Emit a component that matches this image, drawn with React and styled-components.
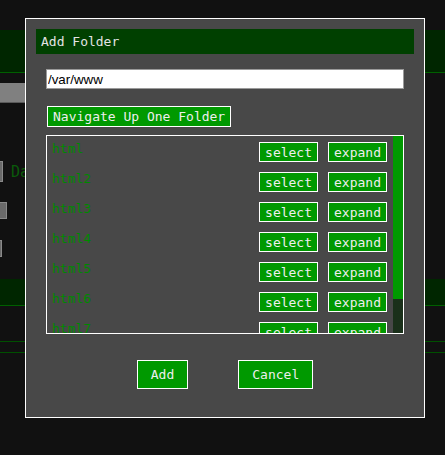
import React from 'react'
import styled, { createGlobalStyle } from 'styled-components'

const GlobalStyle = createGlobalStyle`
  html, body {
    margin: 0;
    padding: 0;
    background: #111111;
    font-family: "DejaVu Sans Mono", monospace;
    font-size: 13px;
  }
`

const Page = styled.div`
  padding-top: 30px;
  height: 455px;
  box-sizing: border-box;
  overflow: hidden;
`

const Band = styled.div`
  height: ${p => p.h}px;
  margin-top: ${p => p.mt || 0}px;
  background: #002600;
  border-bottom: 1px solid #006000;
`

const GrayBar = styled.div`
  margin-top: 10px;
  width: 300px;
  height: 20px;
  box-sizing: border-box;
  background: #808080;
  border-bottom: 1px solid #5a5a5a;
`

const StubRow = styled.div`
  display: flex;
  align-items: center;
  gap: 8px;
  margin-top: ${p => p.mt}px;
`

const Stub = styled.div`
  width: ${p => p.w}px;
  height: ${p => p.h}px;
  box-sizing: border-box;
  background: #6a6a6a;
  border: 1px solid #8a8a8a;
  border-left: none;
`

const DimText = styled.span`
  color: #0a5a0a;
  font-size: 15px;
`

const Rule = styled.div`
  margin-top: ${p => p.mt}px;
  height: 1px;
  background: #005000;
`

const Modal = styled.div`
  position: fixed;
  top: 18px;
  left: 25px;
  width: 400px;
  height: 400px;
  box-sizing: border-box;
  background: #484848;
  border: 1px solid #ffffff;
  padding: 10px;
  display: flex;
  flex-direction: column;
`

const TitleBar = styled.div`
  height: 25px;
  line-height: 25px;
  background: #004000;
  color: #e4e4e4;
  padding-left: 5px;
`

const Body = styled.div`
  padding: 0 10px;
  display: flex;
  flex-direction: column;
  align-items: flex-start;
`

const PathInput = styled.input`
  margin-top: 15px;
  width: 100%;
  height: 20px;
  box-sizing: border-box;
  border: 1px solid #9a9a9a;
  padding: 0 1px;
  font-family: "Liberation Sans", Arial, sans-serif;
  font-size: 13.33px;
  color: #000;
  background: #fff;
  outline: none;
`

const GreenButton = styled.button`
  font-family: "DejaVu Sans Mono", monospace;
  font-size: 13px;
  line-height: 15px;
  color: #eeeeee;
  background: #009900;
  border: 1px solid #ffffff;
  border-radius: 0;
  box-sizing: border-box;
  cursor: pointer;
`

const UpButton = styled(GreenButton)`
  margin-top: 17px;
  margin-left: 1px;
  height: 21px;
  padding: 0 5px;
`

const List = styled.div`
  margin-top: 8px;
  width: 100%;
  height: 199px;
  box-sizing: border-box;
  border: 1px solid #ffffff;
  display: flex;
`

const Rows = styled.div`
  flex: 1;
  overflow: hidden;
  padding-top: 4px;
`

const ScrollTrack = styled.div`
  width: 10px;
  background: #1a301a;
`

const ScrollThumb = styled.div`
  height: 163px;
  background: #009900;
`

const Row = styled.div`
  display: flex;
  align-items: flex-start;
  height: 30px;
  padding: 0 6px 0 5px;
`

const Name = styled.span`
  flex: 1;
  margin-top: 1px;
  line-height: 15px;
  color: #008800;
`

const RowButton = styled(GreenButton)`
  margin-top: 2px;
  margin-left: ${p => p.ml || 0}px;
  height: 20px;
  padding: 0 5px;
`

const Actions = styled.div`
  margin-top: 26px;
  display: flex;
  justify-content: center;
  gap: 50px;
`

const ActionButton = styled(GreenButton)`
  height: 29px;
  padding: 0 13px;
`

const folders = ['html', 'html2', 'html3', 'html4', 'html5', 'html6', 'html7']

export default function App() {
  return (
    <>
      <GlobalStyle />
      <Page>
        <Band h={42} />
        <GrayBar />
        <StubRow mt={58}>
          <Stub w={3} h={21} />
          <DimText>Da</DimText>
        </StubRow>
        <StubRow mt={20}>
          <Stub w={7} h={17} />
        </StubRow>
        <StubRow mt={21}>
          <Stub w={2} h={17} />
        </StubRow>
        <Band h={26} mt={22} />
        <Rule mt={35} />
        <Rule mt={10} />
      </Page>

      <Modal>
        <TitleBar>Add Folder</TitleBar>
        <Body>
          <PathInput defaultValue="/var/www" />
          <UpButton>Navigate Up One Folder</UpButton>
          <List>
            <Rows>
              {folders.map(f => (
                <Row key={f}>
                  <Name>{f}</Name>
                  <RowButton>select</RowButton>
                  <RowButton ml={10}>expand</RowButton>
                </Row>
              ))}
            </Rows>
            <ScrollTrack>
              <ScrollThumb />
            </ScrollTrack>
          </List>
        </Body>
        <Actions>
          <ActionButton>Add</ActionButton>
          <ActionButton>Cancel</ActionButton>
        </Actions>
      </Modal>
    </>
  )
}
